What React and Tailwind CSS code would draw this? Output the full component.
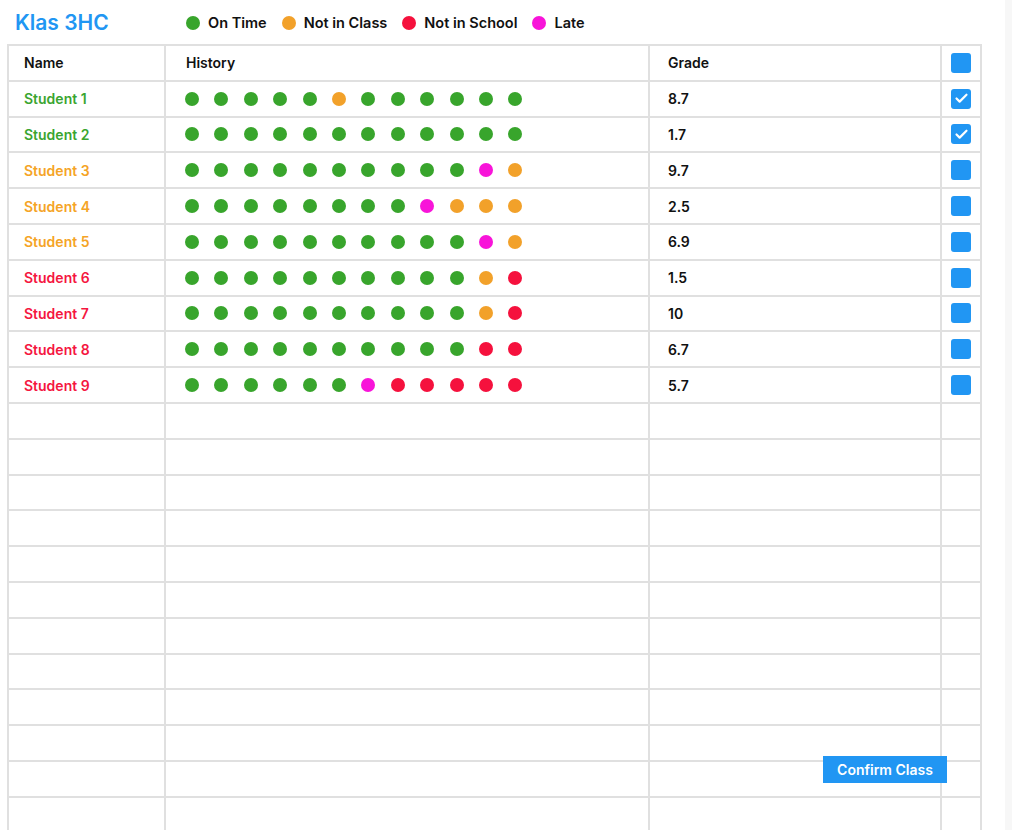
import { Check } from "lucide-react";

const COLORS = {
  G: "bg-[#38a52c]",
  O: "bg-[#f2a12a]",
  R: "bg-[#f5113d]",
  M: "bg-[#f814d9]",
};

const students = [
  { name: "Student 1", color: "text-[#3aa530]", history: "GGGGGOGGGGGG", grade: "8.7", checked: true },
  { name: "Student 2", color: "text-[#3aa530]", history: "GGGGGGGGGGGG", grade: "1.7", checked: true },
  { name: "Student 3", color: "text-[#f5a426]", history: "GGGGGGGGGGMO", grade: "9.7" },
  { name: "Student 4", color: "text-[#f5a426]", history: "GGGGGGGGMOOO", grade: "2.5" },
  { name: "Student 5", color: "text-[#f5a426]", history: "GGGGGGGGGGMO", grade: "6.9" },
  { name: "Student 6", color: "text-[#f5163f]", history: "GGGGGGGGGGOR", grade: "1.5" },
  { name: "Student 7", color: "text-[#f5163f]", history: "GGGGGGGGGGOR", grade: "10" },
  { name: "Student 8", color: "text-[#f5163f]", history: "GGGGGGGGGGRR", grade: "6.7" },
  { name: "Student 9", color: "text-[#f5163f]", history: "GGGGGGMRRRRR", grade: "5.7" },
];

const legend = [
  { label: "On Time", dot: COLORS.G },
  { label: "Not in Class", dot: COLORS.O },
  { label: "Not in School", dot: COLORS.R },
  { label: "Late", dot: COLORS.M },
];

const cell = "h-[35.8px] border-r-2 border-b-2 border-[#e0e0e0] flex items-center";

function Checkbox({ checked }) {
  return (
    <div className="w-[20px] h-[20px] rounded-[3px] bg-[#2196f3] flex items-center justify-center">
      {checked && <Check size={15} strokeWidth={3.5} className="text-white" />}
    </div>
  );
}

function App() {
  const empty = Array.from({ length: 12 });

  return (
    <div className="flex w-full h-[830px] overflow-hidden bg-white text-[14px] text-[#111]" style={{ fontFamily: "Inter, 'Noto Sans', sans-serif" }}>
      <div className="flex-1 flex flex-col">
        <div className="h-[44px] shrink-0 flex items-center pl-[15px] pt-[2px]">
          <h1 className="text-[21px] font-semibold text-[#2196f3] w-[171px]">Klas 3HC</h1>
          <div className="flex items-center gap-[15px] font-semibold text-[14.5px]">
            {legend.map((item) => (
              <div key={item.label} className="flex items-center gap-[8px]">
                <span className={`w-[14px] h-[14px] rounded-full ${item.dot}`}></span>
                <span>{item.label}</span>
              </div>
            ))}
          </div>
        </div>

        <div className="relative shrink-0 ml-[7px] w-[975px]">
          <div className="grid grid-cols-[157px_484px_292px_40px] border-l-2 border-t-2 border-[#e0e0e0] font-semibold">
            <div className={`${cell} pl-[15px]`}>Name</div>
            <div className={`${cell} pl-[20px]`}>History</div>
            <div className={`${cell} pl-[18px]`}>Grade</div>
            <div className={`${cell} justify-center`}><Checkbox /></div>

            {students.map((s) => (
              <div key={s.name} className="contents">
                <div className={`${cell} pl-[15px] ${s.color}`}>{s.name}</div>
                <div className={`${cell} pl-[19px] gap-[15.4px]`}>
                  {s.history.split("").map((c, i) => (
                    <span key={i} className={`w-[14px] h-[14px] rounded-full shrink-0 ${COLORS[c]}`}></span>
                  ))}
                </div>
                <div className={`${cell} pl-[18px]`}>{s.grade}</div>
                <div className={`${cell} justify-center`}><Checkbox checked={s.checked} /></div>
              </div>
            ))}

            {empty.map((_, i) => (
              <div key={i} className="contents">
                <div className={cell}></div>
                <div className={cell}></div>
                <div className={cell}></div>
                <div className={cell}></div>
              </div>
            ))}
          </div>

          <button className="absolute left-[816px] top-[712px] w-[124px] h-[27px] bg-[#2196f3] text-white font-semibold text-[14px]">
            Confirm Class
          </button>
        </div>
      </div>
      <div className="w-[7px] bg-[#f7f7f7]"></div>
    </div>
  );
}

export default App;
